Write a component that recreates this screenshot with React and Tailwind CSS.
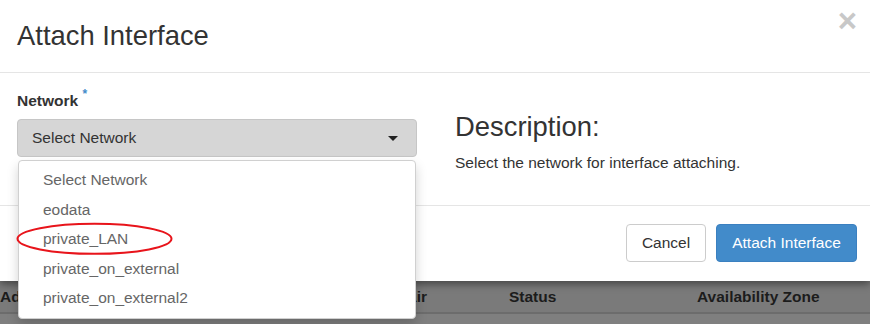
const OPTIONS = ["Select Network", "eodata", "private_LAN", "private_on_external", "private_on_external2"];

export default function App() {
  return (
    <div className="relative w-[870px] h-[324px] overflow-hidden bg-[#7f7f7f] font-['Liberation_Sans',Arial,sans-serif] text-[#333]">
      {/* modal */}
      <div className="relative z-10 h-[281px] bg-white shadow-[0_3px_8px_rgba(0,0,0,0.45)]">
        <div className="h-[73px] border-b border-[#e5e5e5] pl-[17px] pr-[13px] flex justify-between">
          <h4 className="pt-[21px] text-[27.4px] leading-[30px] text-[#333]">Attach Interface</h4>
          <span className="mt-[4px] text-[33px] leading-none font-bold text-[#c8c8c8]">×</span>
        </div>

        <div className="h-[132px] flex pl-[17px] pt-[17px]">
          <div className="w-[400px]">
            <label className="block text-[15.5px] leading-[22px] font-bold text-[#333]">
              Network <span className="relative -top-[8px] text-[12px] text-[#428bca]">*</span>
            </label>
            <div className="mt-[6px] h-[38px] flex items-center justify-between rounded-[4px] border border-[#c6c6c6] bg-[#d6d6d6] pl-[14px] pr-[18px]">
              <span className="text-[15.5px] text-[#333]">Select Network</span>
              <span className="w-0 h-0 border-l-[5px] border-r-[5px] border-t-[5px] border-l-transparent border-r-transparent border-t-[#222]" />
            </div>
          </div>
          <div className="ml-[38px] pt-[22px]">
            <h3 className="text-[27.4px] leading-[30px] text-[#333]">Description:</h3>
            <p className="mt-[10px] text-[15.5px] leading-[22px] text-[#333]">Select the network for interface attaching.</p>
          </div>
        </div>

        <div className="border-t border-[#e5e5e5] flex justify-end gap-[10px] pt-[18px] pr-[13px]">
          <button className="h-[38px] w-[80px] rounded-[4px] border border-[#ccc] bg-white text-[15.5px] text-[#333]">Cancel</button>
          <button className="h-[38px] w-[141px] rounded-[4px] border border-[#3b80c0] bg-[#428bca] text-[15.5px] text-white">Attach Interface</button>
        </div>
      </div>

      {/* dimmed table behind the modal */}
      <div className="h-[33px] flex items-center border-b-2 border-[#6c6c6c] bg-[#7a7a7a] text-[15.5px] font-bold text-[#1c1c1c]">
        <span className="w-[365px]">Address</span>
        <span className="w-[144px]">Key Pair</span>
        <span className="w-[188px]">Status</span>
        <span>Availability Zone</span>
      </div>

      {/* open select menu */}
      <ul className="absolute z-20 left-[18px] top-[160px] w-[398px] h-[159px] rounded-[4px] border border-[#d0d0d0] bg-white pt-[4px] shadow-[0_6px_12px_rgba(0,0,0,0.175)]">
        {OPTIONS.map((o) => (
          <li key={o} className="h-[29.5px] flex items-center pl-[24px] text-[15.5px] text-[#666]">{o}</li>
        ))}
      </ul>

      <svg className="absolute z-30 left-[16px] top-[222px]" width="160" height="35" viewBox="0 0 160 35">
        <ellipse cx="78.5" cy="16.8" rx="77" ry="15" fill="none" stroke="#e8141b" strokeWidth="2" />
      </svg>
    </div>
  );
}
